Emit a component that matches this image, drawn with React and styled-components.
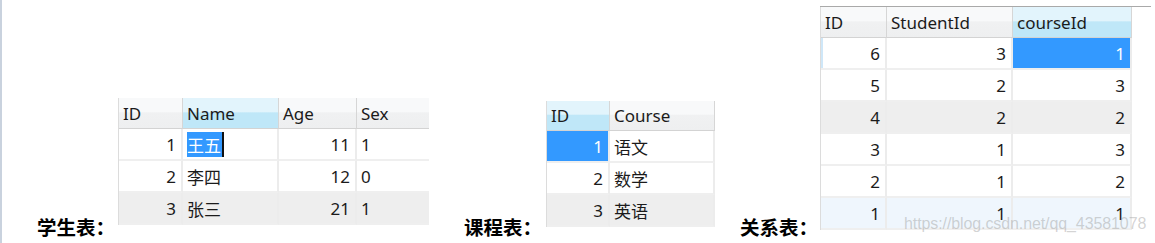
import React from "react";
import styled, { createGlobalStyle } from "styled-components";

const Global = createGlobalStyle`
  html, body { margin: 0; padding: 0; background: #ffffff; }
`;

const Page = styled.div`
  box-sizing: border-box;
  width: 1155px;
  height: 243px;
  overflow: hidden;
  background: #ffffff;
  border-left: 2px solid #c9d2de;
  padding-left: 35px;
  display: flex;
  align-items: flex-end;
`;

const Section = styled.section`
  position: relative;
  display: flex;
  align-items: flex-end;
  margin-left: ${(p) => p.$gap || 0}px;
`;

const Label = styled.div`
  width: ${(p) => p.$w}px;
  flex: none;
  margin-bottom: 3px;
  font-family: "Noto Sans CJK SC", sans-serif;
  font-weight: 700;
  font-size: 19.5px;
  line-height: 26px;
  color: #000000;
  white-space: nowrap;
`;

const Stack = styled.div`
  display: flex;
  flex-direction: column;
  margin-bottom: ${(p) => p.$drop}px;
`;

const Rule = styled.div`
  width: ${(p) => p.$w}px;
  height: 1px;
  background: #a9a9a9;
`;

const Grid = styled.div`
  display: grid;
  grid-template-columns: ${(p) => p.$cols};
  border-left: 1px solid #dcdcdc;
  font-family: "Noto Sans", "Noto Sans CJK SC", sans-serif;
  font-size: 17px;
  color: #1b1b1b;
`;

const Head = styled.div`
  box-sizing: border-box;
  height: ${(p) => p.$h || 31}px;
  display: flex;
  align-items: center;
  padding-left: 4px;
  border-right: ${(p) => (p.$last ? "0" : "1px solid #d6d6d6")};
  border-bottom: 1px solid #d3d3d3;
  background: ${(p) =>
    p.$active
      ? "linear-gradient(#e2f4fc 0%, #e2f4fc 45%, #bfe7f8 50%, #bfe7f8 100%)"
      : "linear-gradient(#f8f9fa 0%, #f8f9fa 45%, #f0f1f2 50%, #eeeff0 100%)"};
`;

const toneBg = {
  plain: "#ffffff",
  gray: "#eeeeee",
  hover: "#eff6fd",
  pick: "#3399ff",
};

const Cell = styled.div`
  box-sizing: border-box;
  height: 32px;
  display: flex;
  align-items: center;
  justify-content: ${(p) => (p.$num ? "flex-end" : "flex-start")};
  padding: 0 5px 0 4px;
  border-right: ${(p) => (p.$last ? "0" : "2px solid #ececec")};
  border-bottom: 2px solid #efefef;
  background: ${(p) => toneBg[p.$tone || "plain"]};
  color: ${(p) => (p.$tone === "pick" ? "#ffffff" : "#1b1b1b")};
  box-shadow: ${(p) => (p.$mark ? "inset 2px 0 0 #cfe7f8" : "none")};
`;

const Selected = styled.span`
  background: #3399ff;
  color: #ffffff;
  border-right: 2px solid #111111;
  padding-right: 1px;
`;

const Watermark = styled.div`
  position: absolute;
  left: 164px;
  bottom: 11px;
  font-family: "Liberation Sans", Arial, sans-serif;
  font-size: 16px;
  line-height: 17px;
  letter-spacing: -0.1px;
  color: rgba(150, 150, 150, 0.42);
  white-space: nowrap;
  pointer-events: none;
`;

const students = [
  { id: 1, name: "王五", age: 11, sex: 1, tone: "plain", pick: true },
  { id: 2, name: "李四", age: 12, sex: 0, tone: "plain" },
  { id: 3, name: "张三", age: 21, sex: 1, tone: "gray" },
];

const courses = [
  { id: 1, name: "语文", tone: "plain", pick: true },
  { id: 2, name: "数学", tone: "plain" },
  { id: 3, name: "英语", tone: "gray" },
];

const links = [
  { id: 6, s: 3, c: 1, tone: "plain", pick: true },
  { id: 5, s: 2, c: 3, tone: "plain" },
  { id: 4, s: 2, c: 2, tone: "gray" },
  { id: 3, s: 1, c: 3, tone: "plain" },
  { id: 2, s: 1, c: 2, tone: "plain" },
  { id: 1, s: 1, c: 1, tone: "hover" },
];

export default function App() {
  return (
    <>
      <Global />
      <Page>
        <Section>
          <Label $w={81}>学生表：</Label>
          <Stack $drop={18}>
            <Grid $cols="64px 96px 78px 72px">
              <Head>ID</Head>
              <Head $active>Name</Head>
              <Head>Age</Head>
              <Head $last>Sex</Head>
              {students.map((r) => (
                <React.Fragment key={r.id}>
                  <Cell $num $tone={r.tone}>{r.id}</Cell>
                  <Cell $tone={r.tone}>
                    {r.pick ? <Selected>{r.name}</Selected> : r.name}
                  </Cell>
                  <Cell $num $tone={r.tone}>{r.age}</Cell>
                  <Cell $last $tone={r.tone}>{r.sex}</Cell>
                </React.Fragment>
              ))}
            </Grid>
          </Stack>
        </Section>

        <Section $gap={35}>
          <Label $w={82}>课程表：</Label>
          <Stack $drop={16}>
            <Grid $cols="63px 105px">
              <Head $h={30} $active>ID</Head>
              <Head $h={30}>Course</Head>
              {courses.map((r) => (
                <React.Fragment key={r.id}>
                  <Cell $num $tone={r.pick ? "pick" : r.tone}>{r.id}</Cell>
                  <Cell $tone={r.tone}>{r.name}</Cell>
                </React.Fragment>
              ))}
            </Grid>
          </Stack>
        </Section>

        <Section $gap={25}>
          <Label $w={80}>关系表：</Label>
          <Stack $drop={13}>
            <Rule $w={331} />
            <Grid $cols="66px 126px 119px">
              <Head>ID</Head>
              <Head>StudentId</Head>
              <Head $active>courseId</Head>
              {links.map((r) => (
                <React.Fragment key={r.id}>
                  <Cell $num $mark={r.pick} $tone={r.tone}>{r.id}</Cell>
                  <Cell $num $tone={r.tone}>{r.s}</Cell>
                  <Cell $num $tone={r.pick ? "pick" : r.tone}>{r.c}</Cell>
                </React.Fragment>
              ))}
            </Grid>
          </Stack>
          <Watermark>https://blog.csdn.net/qq_43581078</Watermark>
        </Section>
      </Page>
    </>
  );
}
